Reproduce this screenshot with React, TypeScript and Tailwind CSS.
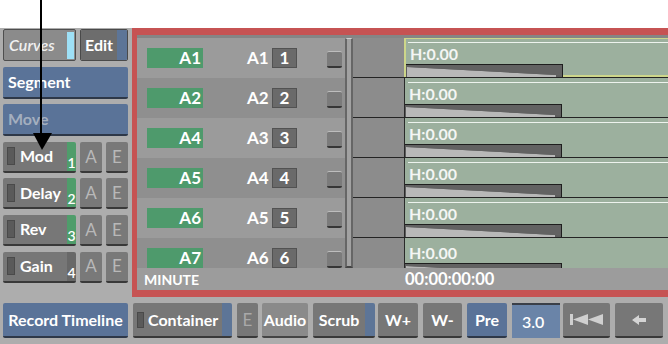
import React from 'react';

const tracks = [
  { src: 'A1', dst: 'A1', num: '1', h: 'h-[40px]' },
  { src: 'A2', dst: 'A2', num: '2', h: 'h-[40px]' },
  { src: 'A4', dst: 'A3', num: '3', h: 'h-[40px]' },
  { src: 'A5', dst: 'A4', num: '4', h: 'h-[40px]' },
  { src: 'A6', dst: 'A5', num: '5', h: 'h-[40px]' },
  { src: 'A7', dst: 'A6', num: '6', h: 'h-[30px]' },
];

const effects = [
  { name: 'Mod', num: '1', on: true },
  { name: 'Delay', num: '2', on: true },
  { name: 'Rev', num: '3', on: true },
  { name: 'Gain', num: '4', on: false },
];

const Wedge = () => (
  <svg width="158" height="13" viewBox="0 0 158 13" className="block shrink-0">
    <rect x="0" y="0" width="157" height="13" fill="#5e5e5e" />
    <polygon points="1,3 150,11 150,13 1,13" fill="#b8b8b8" />
    <polygon points="1,1 156,1 156,12 150,11 1,3" fill="#626262" />
    <line x1="0" y1="0.5" x2="157" y2="0.5" stroke="#1e1e1e" />
    <line x1="156.5" y1="0" x2="156.5" y2="13" stroke="#1e1e1e" />
  </svg>
);

const App: React.FC = () => {
  return (
    <div className="relative w-[668px] h-[344px] overflow-hidden bg-white font-['Lato',sans-serif] select-none">
      <div className="h-[28px] bg-white" />
      <div className="h-[316px] bg-[#adadad] flex flex-col">
        <div className="flex h-[269px]">
          {/* left tool column */}
          <div className="ml-[3px] w-[125px] pt-[1px] flex flex-col gap-[5.6px]">
            <div className="flex h-[32px] gap-[4px]">
              <div className="w-[73px] flex items-center bg-[#8b8b8b] border border-[#4e4e4e] rounded-[2px] pl-[5px]">
                <span className="flex-1 italic font-semibold text-[16px] text-[#f0f0f0]">Curves</span>
                <div className="w-[7px] h-[27px] mr-[1px] bg-[#9ee0f6]" />
              </div>
              <div className="flex-1 flex border border-[#4a4a4a] rounded-[2px] overflow-hidden">
                <div className="flex-1 flex items-center justify-center bg-[#6d6d6d] text-white font-bold text-[16px]">Edit</div>
                <div className="w-[10px] bg-[#5d7597]" />
              </div>
            </div>
            <div className="h-[32px] flex items-center pl-[5px] bg-[#5a7398] rounded-[2px] border-b-2 border-[#2e3848] text-white font-bold text-[16px]">
              Segment
            </div>
            <div className="h-[32px] flex items-center pl-[5px] bg-[#5a7398] rounded-[2px] border-b-2 border-[#2e3848] text-[#a4afbf] font-bold text-[16px]">
              Move
            </div>
            {effects.map((fx) => (
              <div key={fx.name} className="flex h-[31px] gap-[4px]">
                <div className="w-[73px] flex rounded-[2px] border-b-2 border-[#393939] overflow-hidden">
                  <div className="w-[64px] flex items-center bg-[#777777] pl-[4px]">
                    <div className="w-[8px] h-[18px] bg-[#5a5a5a] border border-[#4a4a4a]" />
                    <span className="ml-[5px] text-white font-bold text-[16px]">{fx.name}</span>
                  </div>
                  <div className={`w-[9px] flex items-end justify-center text-white font-semibold text-[14px] leading-[16px] ${fx.on ? 'bg-[#4f9d6b]' : 'bg-[#686868]'}`}>
                    {fx.num}
                  </div>
                </div>
                <div className="w-[22px] flex items-center justify-center bg-[#797979] rounded-[2px] border-b-2 border-[#393939] text-[#b8b8b8] text-[17px]">A</div>
                <div className="w-[22px] flex items-center justify-center bg-[#797979] rounded-[2px] border-b-2 border-[#393939] text-[#b8b8b8] text-[17px]">E</div>
              </div>
            ))}
          </div>

          {/* track frame */}
          <div className="ml-[4px] flex-1 flex flex-col border-l-[5px] border-t-[7px] border-b-[7px] border-[#c65353] bg-[#9b9b9b]">
            <div className="h-[3px] bg-[#858585]" />
            <div className="flex h-[230px]">
              <div className="w-[208px] flex flex-col">
                {tracks.map((t, i) => (
                  <div key={t.src} className={`flex items-start overflow-hidden ${t.h} ${i % 2 ? 'bg-[#8f8f8f]' : 'bg-[#9b9b9b]'}`}>
                    <div className="ml-[10px] mt-[10px] w-[56px] h-[20px] bg-[#4e9a6c] text-right pr-[2px] text-white font-bold text-[17px] leading-[20px]">
                      {t.src}
                    </div>
                    <div className="ml-[44px] mt-[10px] w-[20px] text-white font-bold text-[17px] leading-[20px]">{t.dst}</div>
                    <div className="ml-[5px] mt-[10px] w-[25px] h-[20px] bg-[#6a6a6a] border border-[#525252] text-center text-white font-bold text-[17px] leading-[18px]">
                      {t.num}
                    </div>
                    <div className="ml-[30px] mt-[13px] w-[15px] h-[17px] rounded-[2px] bg-[#7b7b7b] border-t border-[#bdbdbd] border-b-2 border-b-[#363636]" />
                  </div>
                ))}
              </div>
              <div className="w-[8px] bg-[#a2a2a2] border-x-2 border-[#666666] border-t border-t-[#d0d0d0] border-b-2 border-b-[#444]" />
              <div className="flex-1 flex flex-col">
                {tracks.map((t, i) => (
                  <div key={t.src} className={`flex overflow-hidden ${t.h} ${i < 5 ? 'border-b border-[#242424]' : ''}`}>
                    <div className="w-[51px] bg-[#8c8c8c]" />
                    <div
                      className={`flex-1 flex flex-col bg-[#9cb09e] ${
                        i === 0 ? 'border-l-2 border-t border-[#cdd68a] shadow-[inset_0_-2px_0_#cdd68a]' : 'border-l border-[#2a2a2a]'
                      }`}
                    >
                      <div className={`${i === 0 ? 'mt-[3px] ml-[2px]' : 'mt-[4px] ml-[3px]'} h-[2px] bg-[#eef3ee]`} />
                      <div className="pl-[4px] h-[21px] leading-[21px] text-[16px] font-bold text-[#f4f6f4]">H:0.00</div>
                      <Wedge />
                    </div>
                  </div>
                ))}
              </div>
            </div>
            <div className="h-[22px] flex items-center bg-[#9c9c9c] text-white font-bold">
              <div className="w-[268px] pl-[7px] text-[14px]">MINUTE</div>
              <div className="text-[16.5px]">00:00:00:00</div>
            </div>
          </div>
        </div>

        {/* bottom toolbar */}
        <div className="mt-[6px] h-[35px] flex text-white font-bold text-[16px]">
          <div className="ml-[3px] w-[125px] flex items-center justify-center bg-[#5a7398] rounded-[2px] border-b-2 border-[#2e3848]">Record Timeline</div>
          <div className="ml-[5px] w-[99px] flex rounded-[2px] border-b-2 border-[#393939] overflow-hidden">
            <div className="flex-1 flex items-center bg-[#777777] pl-[4px]">
              <div className="w-[7px] h-[16px] bg-[#5a5a5a] border border-[#4a4a4a]" />
              <span className="ml-[4px]">Container</span>
            </div>
            <div className="w-[10px] bg-[#5d7597]" />
          </div>
          <div className="ml-[5px] w-[21px] flex items-center justify-center bg-[#777777] rounded-[2px] border-b-2 border-[#393939] text-[#a9a9a9] font-normal text-[17px]">E</div>
          <div className="ml-[4px] w-[46px] flex items-center justify-center bg-[#8a8a8a] rounded-[2px] border-b-2 border-[#444]">Audio</div>
          <div className="ml-[5px] w-[62px] flex rounded-[2px] border-b-2 border-[#393939] overflow-hidden">
            <div className="flex-1 flex items-center justify-center bg-[#777777]">Scrub</div>
            <div className="w-[10px] bg-[#5d7597]" />
          </div>
          <div className="ml-[3px] w-[40px] flex items-center justify-center bg-[#777777] rounded-[2px] border-b-2 border-[#393939]">W+</div>
          <div className="ml-[5px] w-[39px] flex items-center justify-center bg-[#777777] rounded-[2px] border-b-2 border-[#393939]">W-</div>
          <div className="ml-[5px] w-[40px] flex items-center justify-center bg-[#5a7398] rounded-[2px] border-b-2 border-[#2e3848]">Pre</div>
          <div className="ml-[5px] w-[48px] flex items-center pl-[10px] bg-[#6a84a8] border-t-2 border-[#3a3f48] font-semibold">3.0</div>
          <div className="ml-[3px] w-[47px] flex items-center justify-center bg-[#777777] rounded-[2px] border-b-2 border-[#393939]">
            <svg width="34" height="11" viewBox="0 0 34 11">
              <rect x="0" y="0" width="3" height="11" fill="#cfcfcf" />
              <polygon points="3,5.5 18,0 18,11" fill="#cfcfcf" />
              <polygon points="18,5.5 33,0 33,11" fill="#cfcfcf" />
            </svg>
          </div>
          <div className="ml-[5px] w-[48px] flex items-center justify-center bg-[#777777] rounded-[2px] border-b-2 border-[#393939]">
            <svg width="14" height="10" viewBox="0 0 14 10">
              <polygon points="0,5 7,0 7,3 14,3 14,7 7,7 7,10" fill="#d4d4d4" />
            </svg>
          </div>
        </div>
      </div>

      {/* annotation arrow */}
      <svg className="absolute left-0 top-0" width="60" height="152" viewBox="0 0 60 152">
        <rect x="40" y="0" width="2" height="136" fill="#000" />
        <polygon points="33,133 52,133 42,150" fill="#000" />
      </svg>
    </div>
  );
};

export default App;
